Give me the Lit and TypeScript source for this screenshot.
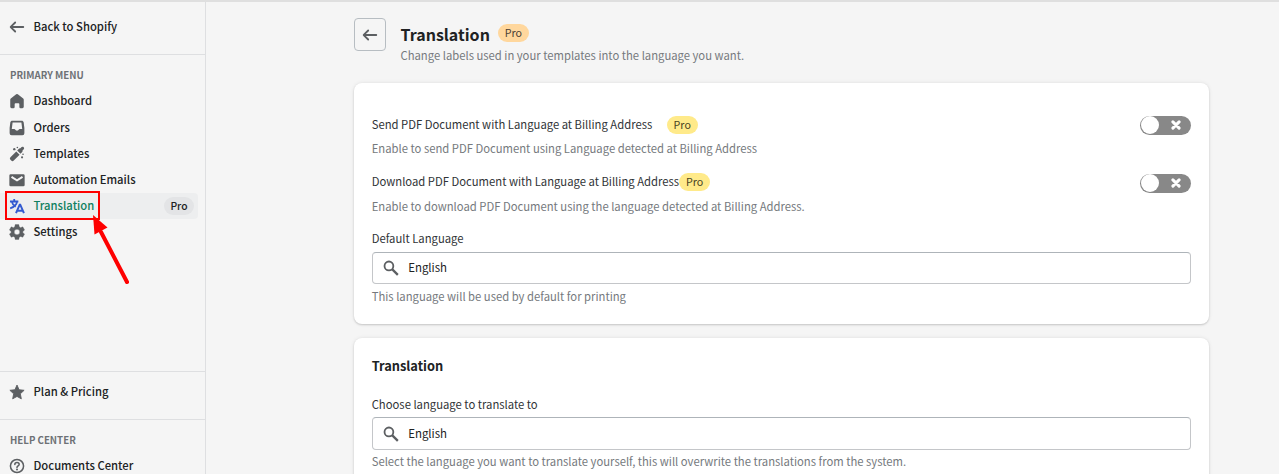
import { LitElement, html, css, svg } from "lit";
import { customElement, property } from "lit/decorators.js";
import { classMap } from "lit/directives/class-map.js";

const glyphs: Record<string, unknown> = {
  back: svg`<path d="M17 9h-11.586l3.293-3.293a.999.999 0 1 0-1.414-1.414l-5 5a.999.999 0 0 0 0 1.414l5 5a.997.997 0 0 0 1.414 0 .999.999 0 0 0 0-1.414l-3.293-3.293h11.586a1 1 0 1 0 0-2z"/>`,
  home: svg`<path d="M9.1 2.600a1.500 1.500 0 0 1 1.800 0l6 4.700c.4.3.6.8.6 1.300v7.900c0 .8-.7 1.500-1.500 1.500h-2a1.400 1.400 0 0 1-1.400-1.400v-3.100a.9.9 0 0 0-.9-.9h-3.400a.9.9 0 0 0-.9.9v3.100a1.400 1.400 0 0 1-1.400 1.400h-2a1.500 1.500 0 0 1-1.500-1.500v-7.900c0-.5.2-1 .6-1.300z"/>`,
  orders: svg`<path fill-rule="evenodd" d="M4.700 2h10.600c1 0 1.900.7 2.100 1.700l.8 6.300v5.800a2.200 2.200 0 0 1-2.200 2.200h-12a2.200 2.200 0 0 1-2.200-2.200v-5.800l.8-6.300c.2-1 1.100-1.700 2.100-1.700zm.4 2-.9 7h2.800c.5 0 .8.300 1 .8.300.8 1.100 1.200 2 1.200s1.700-.4 2-1.200c.2-.5.500-.8 1-.8h2.800l-.9-7z"/>`,
  wand: svg`<path d="M2.700 13.600 9.200 7.100l3.700 3.700-6.500 6.500a2 2 0 0 1-2.800 0l-.9-.9a2 2 0 0 1 0-2.800zM10.200 6.100l2.200-2.100a1.800 1.800 0 0 1 1.500-.4l.9-1.100c.6-.8 1.900-.8 2.600-.1s.7 2-.1 2.600l-1.100.9a1.800 1.800 0 0 1-.4 1.800l-1.900 2.100z"/><circle cx="7" cy="4.600" r="1.300"/><circle cx="10.400" cy="2.800" r=".9"/><circle cx="16.700" cy="10.300" r=".9"/><circle cx="15.600" cy="13.700" r="1.200"/>`,
  mail: svg`<path fill-rule="evenodd" d="M3 3.500h14a1.500 1.500 0 0 1 1.500 1.500v10.500a1.500 1.500 0 0 1-1.500 1.500h-14a1.500 1.500 0 0 1-1.500-1.500v-10.500a1.500 1.500 0 0 1 1.500-1.500zm1.500 2.100-1.200 1.800 6.700 4.400 6.700-4.400-1.200-1.800-5.500 3.600z"/>`,
  translate: svg`<g fill="none" stroke="currentColor" stroke-width="2"><path d="M2.200 5h9.300M6.900 2.300v2.700M4.300 5.400c.5 2.300 1.900 4.100 4.300 5.400M10 5.200c-.4 3.600-3.200 6-7.600 7.400"/><path d="M8.900 17.900l4.100-9.400h.6l4.100 9.400M10.600 15.200h5.400" stroke-width="2.200"/></g>`,
  gear: svg`<path fill-rule="evenodd" d="M8 1.800h4l.5 2.500 1.500.9 2.400-.9 2 3.500-1.900 1.600v1.300l1.900 1.600-2 3.500-2.400-.9-1.500.9-.5 2.500h-4l-.5-2.500-1.500-.9-2.400.9-2-3.500 1.900-1.600v-1.300l-1.900-1.600 2-3.500 2.400.9 1.500-.9zM10 6.900a3.100 3.100 0 1 0 0 6.200 3.100 3.100 0 0 0 0-6.200z" stroke="currentColor" stroke-width=".4" stroke-linejoin="round"/>`,
  star: svg`<path d="M10 2.300l2.300 5.200 5.600.6-4.200 3.900 1.100 5.600-4.800-2.700-4.800 2.700 1.100-5.600-4.200-3.900 5.600-.6z" stroke="currentColor" stroke-width="1" stroke-linejoin="round"/>`,
  help: svg`<g fill="none" stroke="currentColor" stroke-width="1.700"><circle cx="10" cy="10" r="7.300"/><path d="M7.600 8.400c0-1.400 1-2.300 2.400-2.300s2.400.8 2.400 2.100c0 1.700-2.400 1.800-2.400 3.500" stroke-linecap="round"/></g><circle cx="10" cy="14" r="1.100"/>`,
  search: svg`<g fill="none" stroke="currentColor" stroke-width="2"><circle cx="7.700" cy="7.700" r="4.900"/><path d="M11.200 11.200l6.400 6.400" stroke-width="2.500"/></g>`,
};

@customElement("ui-icon")
class UiIcon extends LitElement {
  @property() name = "";
  static styles = css`
    :host { display: block; width: 18px; height: 18px; color: #5c5f62; flex: none; }
    svg { display: block; width: 100%; height: 100%; fill: currentColor; }
  `;
  render() {
    return html`<svg viewBox="0 0 20 20">${glyphs[this.name]}</svg>`;
  }
}

@customElement("ui-switch")
class UiSwitch extends LitElement {
  static styles = css`
    :host { display: block; flex: none; }
    .track { box-sizing: border-box; width: 51px; height: 19px; border-radius: 10px; background: #888; display: flex; align-items: center; justify-content: space-between; padding: 0 10px 0 1px; }
    .knob { width: 18px; height: 18px; border-radius: 50%; background: #fff; }
    svg { width: 10px; height: 10px; }
  `;
  render() {
    return html`<div class="track"><span class="knob"></span>
      <svg viewBox="0 0 10 10"><path d="M1.900 1.900L8.100 8.100M8.100 1.900L1.900 8.100" stroke="#fff" stroke-width="3" stroke-linecap="round"/></svg></div>`;
  }
}

@customElement("language-field")
class LanguageField extends LitElement {
  @property() label = "";
  @property() help = "";
  @property({ type: Boolean }) tall = false;
  static styles = css`
    :host { display: block; }
    .label { height: 24px; line-height: 22px; color: #303336; }
    .input { box-sizing: border-box; height: 32px; border: 1px solid #c4c6c9; border-top-color: #aeb4b9; border-radius: 4px; display: flex; align-items: center; gap: 8.500px; padding-left: 9px; margin-top: 1px; color: #202223; font-size: 11.450px; }
    .input span { margin-bottom: 2px; }
    .input.tall { height: 33px; margin-top: 0; }
    .help { height: 20px; line-height: 18px; margin-top: 3px; color: #75797d; }
    .tall + .help { margin-top: 2px; }
  `;
  render() {
    return html`<div class="label">${this.label}</div>
      <div class=${classMap({ input: true, tall: this.tall })}><ui-icon name="search"></ui-icon><span>English</span></div>
      <div class="help">${this.help}</div>`;
  }
}

@customElement("app-root")
class AppRoot extends LitElement {
  static styles = css`
    :host { display: block; position: relative; height: 474px; overflow: hidden; box-sizing: border-box; border-top: 2px solid #dfdfdf; background: #f5f5f5; color: #202223; font: 400 11.270px/20px "Noto Sans CJK SC", "Noto Sans CJK JP", sans-serif; }
    .layout { display: flex; height: 472px; }
    .side { box-sizing: border-box; width: 206px; border-right: 1px solid #dedfe1; display: flex; flex-direction: column; flex: none; font-weight: 500; }
    .group { border-top: 1px solid #dedfe1; box-sizing: border-box; flex: none; }
    .group.first { border: 0; height: 52px; padding-top: 12px; }
    .group.menu { height: 317px; padding-top: 10px; }
    .group.plan { height: 48px; padding-top: 7px; }
    .group.aid { padding-top: 10px; }
    .heading { height: 20px; line-height: 20px; padding-left: 10px; font-size: 9.700px; font-weight: 700; color: #6d7175; margin-bottom: 3px; }
    .row { height: 26px; display: flex; align-items: center; padding-left: 8px; padding-right: 4px; margin-right: 7px; border-radius: 0 4px 4px 0; }
    .heading + .row + .row { margin-top: 1px; }
    .row .text { margin-left: 7.500px; margin-bottom: 2px; flex: 1; }
    .row.active { background: #edeeef; color: #108060; }
    .row.active ui-icon { color: #3259d0; }
    .count { box-sizing: border-box; width: 30px; text-align: center; height: 18px; line-height: 18px; border-radius: 9px; background: #e3e4e6; color: #202223; font-size: 10.300px; }
    .main { width: 855px; margin-left: 148px; flex: none; }
    .head { height: 81px; display: flex; box-sizing: border-box; padding-top: 16px; }
    .backbtn { box-sizing: border-box; width: 32px; height: 33px; border: 1px solid #b7bdc2; border-radius: 4px; display: flex; align-items: center; justify-content: center; }
    .titles { margin-left: 14.500px; }
    .title { display: flex; height: 27px; gap: 8px; }
    .title h1 { margin: 4px 0 0; font-size: 16px; line-height: 25px; font-weight: 700; }
    .badge { box-sizing: border-box; width: 31px; height: 18px; line-height: 18px; border-radius: 9px; text-align: center; background: #ffd79d; color: #4a4034; font-size: 10.700px; flex: none; }
    .title .badge { margin-top: 6px; }
    .badge.yellow { background: #ffea8a; color: #47431f; }
    .sub { color: #75797d; height: 20px; }
    .card { box-sizing: border-box; background: #fff; border-radius: 8px; box-shadow: 0 0 4px rgba(23,24,24,.08), 0 1px 2px rgba(0,0,0,.16); padding: 0 18px 0 17.700px; margin-bottom: 14px; }
    .options { height: 241px; padding-top: 32px; }
    .option { display: flex; height: 20px; align-items: center; color: #303336; }
    .option .name { margin-bottom: 2px; }
    .option .badge { margin-left: 14.500px; }
    .option .badge.tight { margin-left: 0; }
    .option.raised .badge { margin-bottom: 2px; }
    .option.raised .name { margin-bottom: 4px; }
    .option ui-switch { margin-left: auto; }
    .desc { color: #75797d; height: 20px; line-height: 18px; margin-top: 4px; margin-bottom: 14px; }
    .desc.last { margin-bottom: 10px; }
    .translate { height: 200px; padding-top: 18px; }
    h2 { margin: 0 0 17px; font-size: 12.800px; line-height: 20px; font-weight: 700; }
    .marker { position: absolute; left: 0; top: 188px; width: 140px; height: 100px; }
  `;

  private row(icon: string, text: string, active = false) {
    return html`<div class=${classMap({ row: true, active })}>
      <ui-icon name=${icon}></ui-icon><span class="text">${text}</span>
      ${active ? html`<span class="count">Pro</span>` : ""}
    </div>`;
  }

  render() {
    return html`
      <div class="layout">
        <nav class="side">
          <div class="group first">${this.row("back", "Back to Shopify")}</div>
          <div class="group menu">
            <div class="heading">PRIMARY MENU</div>
            ${this.row("home", "Dashboard")}
            ${this.row("orders", "Orders")}
            ${this.row("wand", "Templates")}
            ${this.row("mail", "Automation Emails")}
            ${this.row("translate", "Translation", true)}
            ${this.row("gear", "Settings")}
          </div>
          <div class="group plan">${this.row("star", "Plan & Pricing")}</div>
          <div class="group aid">
            <div class="heading">HELP CENTER</div>
            ${this.row("help", "Documents Center")}
          </div>
        </nav>
        <main class="main">
          <header class="head">
            <div class="backbtn"><ui-icon name="back"></ui-icon></div>
            <div class="titles">
              <div class="title"><h1>Translation</h1><span class="badge">Pro</span></div>
              <div class="sub">Change labels used in your templates into the language you want.</div>
            </div>
          </header>
          <section class="card options">
            <div class="option"><span class="name">Send PDF Document with Language at Billing Address</span><span class="badge yellow">Pro</span><ui-switch></ui-switch></div>
            <div class="desc">Enable to send PDF Document using Language detected at Billing Address</div>
            <div class="option raised"><span class="name">Download PDF Document with Language at Billing Address</span><span class="badge yellow tight">Pro</span><ui-switch></ui-switch></div>
            <div class="desc last">Enable to download PDF Document using the language detected at Billing Address.</div>
            <language-field label="Default Language" help="This language will be used by default for printing"></language-field>
          </section>
          <section class="card translate">
            <h2>Translation</h2>
            <language-field tall label="Choose language to translate to" help="Select the language you want to translate yourself, this will overwrite the translations from the system."></language-field>
          </section>
        </main>
      </div>
      <svg class="marker" viewBox="0 190 140 100">
        <rect x="6" y="192" width="93" height="27" fill="none" stroke="#fe0000" stroke-width="2"/>
        <path d="M101 232L127 282" stroke="#fe0000" stroke-width="4" stroke-linecap="round"/>
        <path d="M93 215L107.500 227.500L94.500 234.500z" fill="#fe0000"/>
      </svg>
    `;
  }
}
